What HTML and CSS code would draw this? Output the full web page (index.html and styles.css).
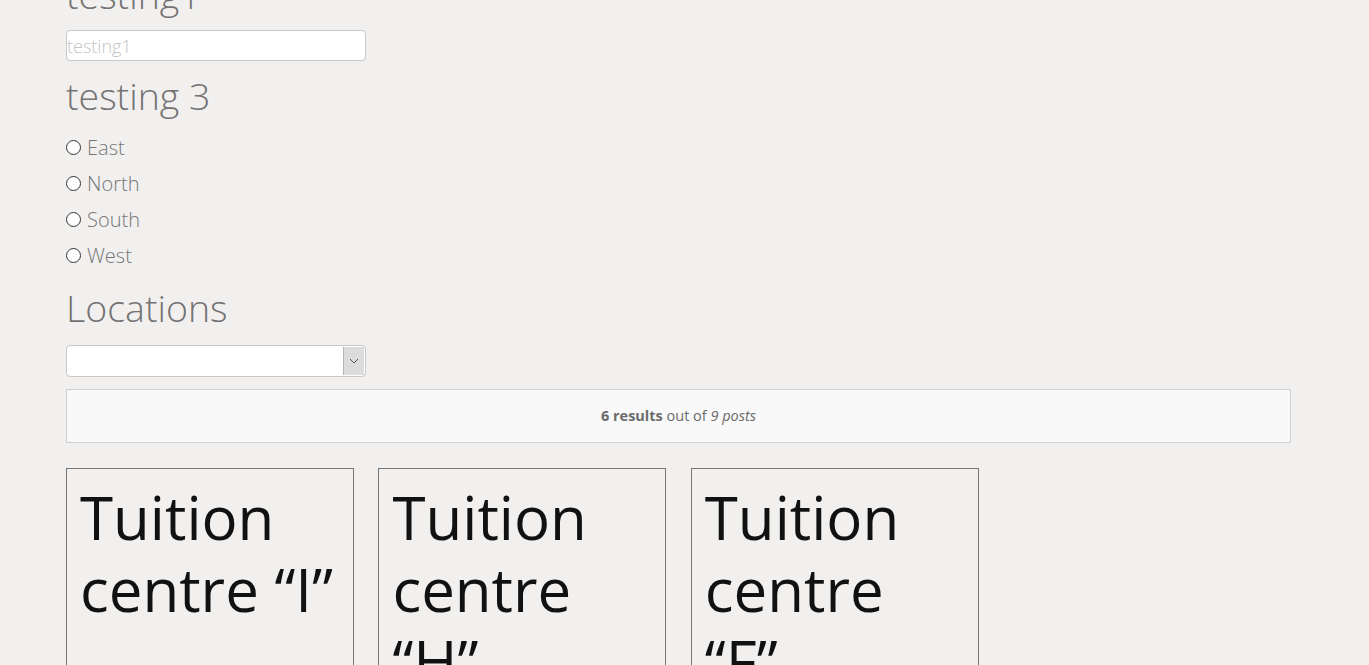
FILE: index.html
```html
<!DOCTYPE html>
<html>
<head>
<meta charset="utf-8">
<link rel="stylesheet" href="styles.css">
</head>
<body>
<div class="page">
  <form class="filters">
    <h2 class="field-title">testing1</h2>
    <input class="text-input" type="text" placeholder="testing1">
    <h2 class="field-title">testing 3</h2>
    <div class="radios">
      <label class="radio-row"><input type="radio" name="area"><span>East</span></label>
      <label class="radio-row"><input type="radio" name="area"><span>North</span></label>
      <label class="radio-row"><input type="radio" name="area"><span>South</span></label>
      <label class="radio-row"><input type="radio" name="area"><span>West</span></label>
    </div>
    <h2 class="field-title">Locations</h2>
    <div class="select">
      <span class="select-value"></span>
      <span class="select-arrow"><svg width="10" height="6" viewBox="0 0 10 6"><path d="M1 1 L5 5 L9 1" fill="none" stroke="#555" stroke-width="1"/></svg></span>
    </div>
  </form>
  <div class="results"><strong>6 results</strong> out of <em>9 posts</em></div>
  <div class="cards">
    <div class="card"><h3 class="card-title">Tuition centre “I”</h3></div>
    <div class="card"><h3 class="card-title">Tuition centre “H”</h3></div>
    <div class="card"><h3 class="card-title">Tuition centre “F”</h3></div>
  </div>
</div>
</body>
</html>
```
FILE: styles.css
```css
html, body {
  margin: 0;
  padding: 0;
  background: #f1f0ef;
  overflow: hidden;
}
body {
  font-family: "Open Sans", "Liberation Sans", sans-serif;
  color: #777;
}
.page {
  width: 1225px;
  margin: -40px 0 0 66px;
}
.filters {
  display: flex;
  flex-direction: column;
  align-items: flex-start;
}
.field-title {
  margin: 10px 0 0;
  font-weight: 300;
  font-size: 37.5px;
  line-height: 50px;
  color: #747272;
}
.text-input {
  box-sizing: border-box;
  width: 300px;
  height: 31px;
  margin: 10px 0 0;
  padding: 0;
  border: 1px solid #c8c8c8;
  border-radius: 4px;
  background: #fff;
  font-family: "Open Sans", sans-serif;
  font-weight: 300;
  font-size: 18px;
}
.text-input::placeholder {
  color: #c4c4c4;
}
.radios {
  display: flex;
  flex-direction: column;
  margin-top: 8px;
}
.radio-row {
  display: flex;
  align-items: center;
  height: 36px;
  font-size: 20px;
  font-weight: 300;
  color: #777;
}
.radio-row input {
  appearance: none;
  -webkit-appearance: none;
  box-sizing: border-box;
  width: 15px;
  height: 15px;
  margin: 0 6px 0 0;
  border: 1px solid #333;
  border-radius: 50%;
  background: #fff;
}
.select {
  box-sizing: border-box;
  display: flex;
  width: 300px;
  height: 32px;
  margin-top: 12px;
  border: 1px solid #c8c8c8;
  border-radius: 4px;
  background: #fff;
  overflow: hidden;
}
.select-value {
  flex: 1;
}
.select-arrow {
  width: 20px;
  margin: 1px;
  border-left: 1px solid #b5b5b5;
  background: #dcdcdc;
  display: flex;
  align-items: center;
  justify-content: center;
}
.results {
  box-sizing: border-box;
  height: 54px;
  margin-top: 12px;
  border: 1px solid #cfcfcf;
  background: #f9f9f9;
  text-align: center;
  line-height: 52px;
  font-size: 14.5px;
  color: #6b6b6b;
}
.results strong { font-weight: 700; }
.results em { font-style: italic; }
.cards {
  display: grid;
  grid-template-columns: repeat(3, 288px);
  column-gap: 24.4px;
  margin-top: 25px;
}
.card {
  box-sizing: border-box;
  height: 400px;
  border: 1px solid #777;
  padding: 12px 13px;
}
.card-title {
  margin: 0;
  font-weight: 400;
  font-size: 60px;
  line-height: 72px;
  color: #111;
}
```
